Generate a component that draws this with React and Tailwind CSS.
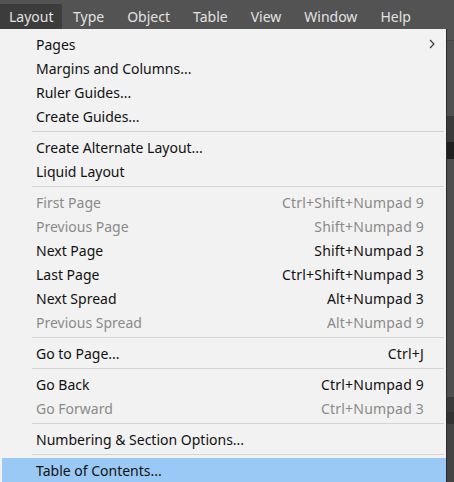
import React from 'react';

const menuBar = ['Layout', 'Type', 'Object', 'Table', 'View', 'Window', 'Help'];

const groups = [
  [
    { label: 'Pages', sub: true },
    { label: 'Margins and Columns...' },
    { label: 'Ruler Guides...' },
    { label: 'Create Guides...' },
  ],
  [{ label: 'Create Alternate Layout...' }, { label: 'Liquid Layout' }],
  [
    { label: 'First Page', shortcut: 'Ctrl+Shift+Numpad 9', disabled: true },
    { label: 'Previous Page', shortcut: 'Shift+Numpad 9', disabled: true },
    { label: 'Next Page', shortcut: 'Shift+Numpad 3' },
    { label: 'Last Page', shortcut: 'Ctrl+Shift+Numpad 3' },
    { label: 'Next Spread', shortcut: 'Alt+Numpad 3' },
    { label: 'Previous Spread', shortcut: 'Alt+Numpad 9', disabled: true },
  ],
  [{ label: 'Go to Page...', shortcut: 'Ctrl+J' }],
  [
    { label: 'Go Back', shortcut: 'Ctrl+Numpad 9' },
    { label: 'Go Forward', shortcut: 'Ctrl+Numpad 3', disabled: true },
  ],
  [{ label: 'Numbering & Section Options...' }],
  [{ label: 'Table of Contents...', active: true }],
];

const MenuItem = ({ item }) => (
  <div
    className={`flex items-center h-[24px] pl-[34px] pr-[22px] ${
      item.active ? 'bg-[#99c9f4]' : ''
    } ${item.disabled ? 'text-[#8a8a8a]' : 'text-[#111]'}`}
  >
    <span className="flex-1">{item.label}</span>
    {item.shortcut && <span className="tracking-[0.2px]">{item.shortcut}</span>}
    {item.sub && (
      <svg width="8" height="10" viewBox="0 0 8 10" className="-mr-[12px]">
        <path d="M2 1 L6 5 L2 9" fill="none" stroke="#333" strokeWidth="1.1" />
      </svg>
    )}
  </div>
);

export default function App() {
  return (
    <div
      className="w-[454px] h-[482px] overflow-hidden bg-[#535353] flex flex-col"
      style={{ fontFamily: '"Noto Sans", "Open Sans", sans-serif' }}
    >
      <div className="h-[29px] flex items-end text-[14px] text-[#e2e2e2] shrink-0">
        {menuBar.map((m, i) => (
          <div
            key={m}
            className={`h-[25px] flex items-center ${
              i === 0
                ? 'bg-[#3c3c3c] pl-[9px] pr-[8px] rounded-tr-[2px]'
                : 'px-[11.5px]'
            }`}
          >
            {m}
          </div>
        ))}
      </div>
      <div className="flex flex-1 min-h-0">
        <div className="w-[447px] bg-[#f2f2f2] border-r border-[#2a2a2a] pt-[3px] pl-[2px] text-[14px] flex flex-col">
          {groups.map((g, gi) => (
            <div key={gi}>
              {gi > 0 && (
                <div className="h-[7px] flex items-center pl-[30px] pr-[2px]">
                  <div className="h-px w-full bg-[#d4d4d4]" />
                </div>
              )}
              {g.map((item) => (
                <MenuItem key={item.label} item={item} />
              ))}
            </div>
          ))}
        </div>
        <div className="flex-1 flex flex-col">
          <div className="h-[12px] bg-[#535353] border-b border-[#444]" />
          <div className="h-[75px] bg-[#505050]" />
          <div className="h-[26px] bg-[#3a3a3a]" />
          <div className="h-[17px] bg-[#1f1f1f]" />
          <div className="h-[238px] bg-[#4e4e4e]" />
          <div className="h-[15px] bg-[#3a3a3a]" />
          <div className="h-[12px] bg-[#323232]" />
          <div className="flex-1 bg-[#444]" />
        </div>
      </div>
    </div>
  );
}
